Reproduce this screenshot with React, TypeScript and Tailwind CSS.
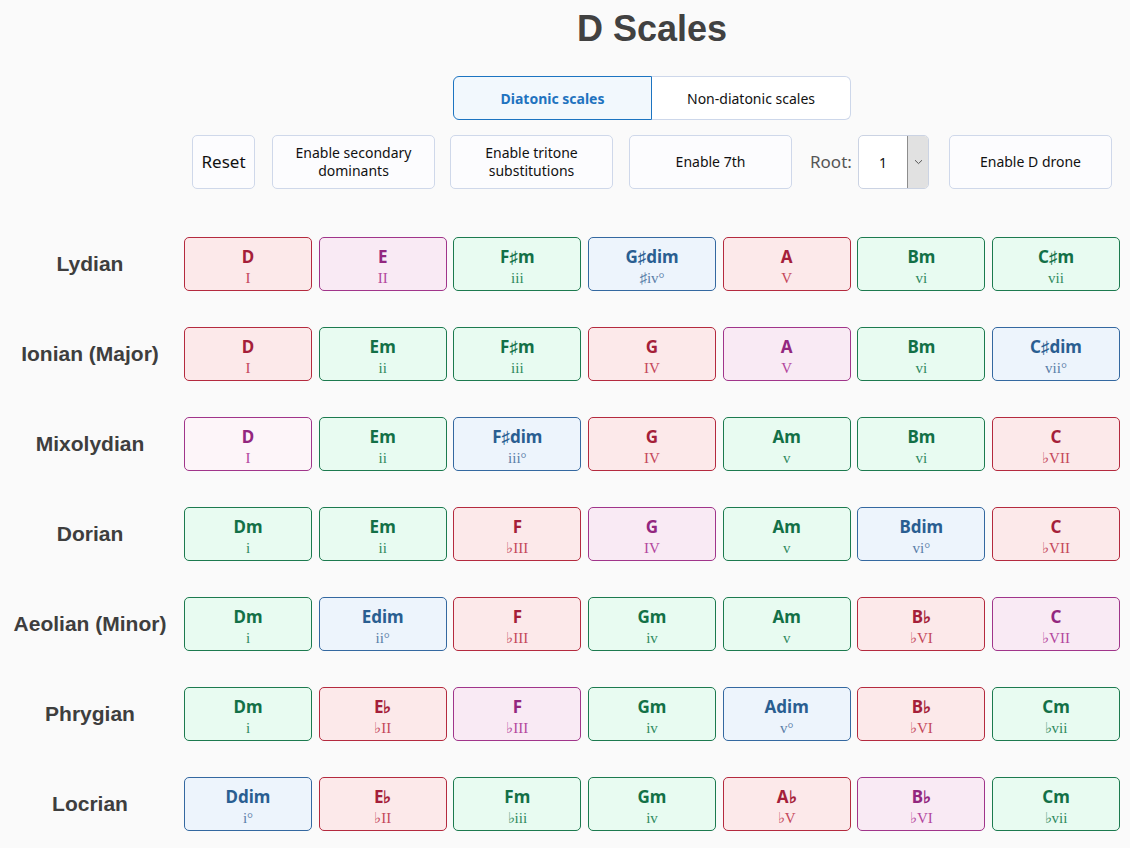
import React from "react";

type Kind = "major" | "minor" | "dim" | "accent" | "accentLight";

type Chord = { name: string; numeral: string; kind: Kind };

const kindStyles: Record<Kind, { card: string; name: string; numeral: string }> = {
  major: {
    card: "bg-[#fce9ea] border-[#b42a3e]",
    name: "text-[#a51f3a]",
    numeral: "text-[#c4475a]",
  },
  minor: {
    card: "bg-[#e8fbf1] border-[#1c7a4f]",
    name: "text-[#137047]",
    numeral: "text-[#2f8a5e]",
  },
  dim: {
    card: "bg-[#edf4fc] border-[#3468a0]",
    name: "text-[#2a5e91]",
    numeral: "text-[#5a7ea8]",
  },
  accent: {
    card: "bg-[#f9eaf4] border-[#a0358a]",
    name: "text-[#93277f]",
    numeral: "text-[#b3469d]",
  },
  accentLight: {
    card: "bg-[#fdf5f9] border-[#a0358a]",
    name: "text-[#93277f]",
    numeral: "text-[#b3469d]",
  },
};

const c = (name: string, numeral: string, kind: Kind): Chord => ({ name, numeral, kind });

const scales: { label: string; chords: Chord[] }[] = [
  {
    label: "Lydian",
    chords: [
      c("D", "I", "major"),
      c("E", "II", "accent"),
      c("F♯m", "iii", "minor"),
      c("G♯dim", "♯iv°", "dim"),
      c("A", "V", "major"),
      c("Bm", "vi", "minor"),
      c("C♯m", "vii", "minor"),
    ],
  },
  {
    label: "Ionian (Major)",
    chords: [
      c("D", "I", "major"),
      c("Em", "ii", "minor"),
      c("F♯m", "iii", "minor"),
      c("G", "IV", "major"),
      c("A", "V", "accent"),
      c("Bm", "vi", "minor"),
      c("C♯dim", "vii°", "dim"),
    ],
  },
  {
    label: "Mixolydian",
    chords: [
      c("D", "I", "accentLight"),
      c("Em", "ii", "minor"),
      c("F♯dim", "iii°", "dim"),
      c("G", "IV", "major"),
      c("Am", "v", "minor"),
      c("Bm", "vi", "minor"),
      c("C", "♭VII", "major"),
    ],
  },
  {
    label: "Dorian",
    chords: [
      c("Dm", "i", "minor"),
      c("Em", "ii", "minor"),
      c("F", "♭III", "major"),
      c("G", "IV", "accent"),
      c("Am", "v", "minor"),
      c("Bdim", "vi°", "dim"),
      c("C", "♭VII", "major"),
    ],
  },
  {
    label: "Aeolian (Minor)",
    chords: [
      c("Dm", "i", "minor"),
      c("Edim", "ii°", "dim"),
      c("F", "♭III", "major"),
      c("Gm", "iv", "minor"),
      c("Am", "v", "minor"),
      c("B♭", "♭VI", "major"),
      c("C", "♭VII", "accent"),
    ],
  },
  {
    label: "Phrygian",
    chords: [
      c("Dm", "i", "minor"),
      c("E♭", "♭II", "major"),
      c("F", "♭III", "accent"),
      c("Gm", "iv", "minor"),
      c("Adim", "v°", "dim"),
      c("B♭", "♭VI", "major"),
      c("Cm", "♭vii", "minor"),
    ],
  },
  {
    label: "Locrian",
    chords: [
      c("Ddim", "i°", "dim"),
      c("E♭", "♭II", "major"),
      c("Fm", "♭iii", "minor"),
      c("Gm", "iv", "minor"),
      c("A♭", "♭V", "major"),
      c("B♭", "♭VI", "accent"),
      c("Cm", "♭vii", "minor"),
    ],
  },
];

const sans = "font-['Noto_Sans',sans-serif]";

function ChordCard({ chord }: { chord: Chord }) {
  const s = kindStyles[chord.kind];
  return (
    <div className={`flex h-[54px] flex-col items-center rounded-[5px] border pt-[9px] ${s.card}`}>
      <span className={`${sans} text-[17px] leading-[20px] font-bold ${s.name}`}>{chord.name}</span>
      <span className={`mt-[2px] font-['Liberation_Serif',serif] text-[15px] leading-[18px] ${s.numeral}`}>
        {chord.numeral}
      </span>
    </div>
  );
}

function ToolButton({ children, className = "" }: { children: React.ReactNode; className?: string }) {
  return (
    <button
      type="button"
      className={`flex h-[54px] shrink-0 items-center justify-center rounded-[5px] border border-[#cfd8ea] bg-[#fcfcfe] text-center text-[14px] leading-[18px] text-[#111] ${sans} ${className}`}
    >
      {children}
    </button>
  );
}

export default function App() {
  return (
    <div className="min-h-screen bg-[#fafafa] pb-4">
      <div className="flex flex-col items-center pl-[174px]">
        <h1 className="mt-[7px] font-['Liberation_Sans',Arial,sans-serif] text-[36px] leading-[43px] font-bold text-[#414141]">
          D Scales
        </h1>

        <div className={`mt-[26px] flex ${sans} text-[14px]`}>
          <button
            type="button"
            className="h-[44px] w-[199px] rounded-l-[6px] border border-[#1c74c1] bg-[#f2f8fd] font-bold text-[#1f73bf]"
          >
            Diatonic scales
          </button>
          <button
            type="button"
            className="h-[44px] w-[199px] rounded-r-[6px] border border-l-0 border-[#cdd7ea] bg-white text-[#111]"
          >
            Non-diatonic scales
          </button>
        </div>

        {/* explicit spacing: the toolbar gaps in the design are not uniform */}
        <div className="mt-[15px] flex items-center">
          <ToolButton className="w-[63px] text-[17px]">Reset</ToolButton>
          <ToolButton className="ml-[17px] w-[163px] px-3">Enable secondary dominants</ToolButton>
          <ToolButton className="ml-[15px] w-[163px] px-6">Enable tritone substitutions</ToolButton>
          <ToolButton className="ml-[16px] w-[163px]">Enable 7th</ToolButton>
          <span className={`ml-[18px] w-[45px] ${sans} text-[17px] text-[#555]`}>Root:</span>
          <div className="ml-[3px] flex h-[54px] w-[71px] overflow-hidden rounded-[5px] border border-[#cbd3e3] bg-white">
            <span className={`flex flex-1 items-center justify-center ${sans} text-[14px] text-[#111]`}>1</span>
            <span className="flex w-[21px] items-center justify-center border-l border-[#8d8d8d] bg-[#e1e1e1]">
              <svg width="9" height="6" viewBox="0 0 9 6" fill="none">
                <path d="M1 1.2 L4.5 4.6 L8 1.2" stroke="#555" strokeWidth="1" />
              </svg>
            </span>
          </div>
          <ToolButton className="ml-[20px] w-[163px]">Enable D drone</ToolButton>
        </div>
      </div>

      <div className="mt-[48px] flex flex-col gap-y-[36px]">
        {scales.map((scale) => (
          <div key={scale.label} className="flex items-center">
            <div className="w-[180px] text-center font-['Liberation_Sans',Arial,sans-serif] text-[21px] font-bold text-[#3e3e3e]">
              {scale.label}
            </div>
            <div className="ml-[4px] grid w-[936px] grid-cols-7 gap-x-[6.67px]">
              {scale.chords.map((chord, i) => (
                <ChordCard key={i} chord={chord} />
              ))}
            </div>
          </div>
        ))}
      </div>
    </div>
  );
}
